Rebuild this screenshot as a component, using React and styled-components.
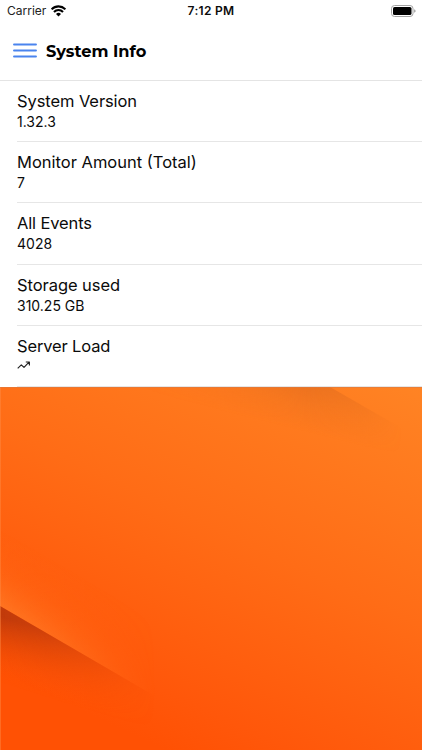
import React from "react";
import styled, { createGlobalStyle } from "styled-components";

const GlobalStyle = createGlobalStyle`
  * { box-sizing: border-box; }
  html, body { margin: 0; padding: 0; }
  body { overflow: hidden; font-family: Inter, "Liberation Sans", sans-serif; color: #0b0b0b; }
  svg { display: block; }
`;

const Screen = styled.main`
  width: 422px;
  height: 750px;
  display: flex;
  flex-direction: column;
  background: #fff;
  overflow: hidden;
`;

const StatusBar = styled.div`
  height: 22px;
  flex: none;
  display: grid;
  grid-template-columns: 1fr auto 1fr;
  align-items: center;
  padding: 0 6px 0 7px;
`;

const Carrier = styled.div`
  display: flex;
  align-items: center;
  gap: 5px;
  font-size: 12px;
  line-height: 22px;
  color: #222;
`;

const Clock = styled.time`
  font-size: 12px;
  line-height: 22px;
  font-weight: 600;
  letter-spacing: 0.3px;
  margin-right: 1px;
`;

const Battery = styled.div`
  justify-self: end;
`;

const Header = styled.header`
  height: 59px;
  flex: none;
  display: flex;
  align-items: center;
  gap: 9px;
  padding: 0 13px 1px;
  border-bottom: 1px solid #e4e4e4;
`;

const MenuButton = styled.button`
  width: 24px;
  height: 15px;
  padding: 0;
  border: 0;
  background: none;
`;

const Title = styled.h1`
  margin: 0;
  font-family: Montserrat, Inter, sans-serif;
  font-size: 16.2px;
  line-height: 22px;
  font-weight: 700;
  color: #000;
`;

const List = styled.ul`
  flex: none;
  margin: 0;
  padding: 0 0 0 17px;
  list-style: none;
  display: grid;
  grid-template-rows: 61px 61px 62px 61px 61px;
`;

const Row = styled.li`
  padding-top: 9px;
  border-bottom: 1px solid #e6e6e6;
`;

const Label = styled.div`
  font-size: 16.5px;
  line-height: 22px;
  letter-spacing: ${(p) => p.$tracking}px;
  white-space: nowrap;
`;

const Value = styled.div`
  font-size: 14px;
  line-height: 20px;
`;

const Wallpaper = styled.div`
  flex: 1;
  min-height: 0;
`;

const rows = [
  { label: "System Version", value: "1.32.3", tracking: -0.09 },
  { label: "Monitor Amount (Total)", value: "7", tracking: 0 },
  { label: "All Events", value: "4028", tracking: -0.13 },
  { label: "Storage used", value: "310.25 GB", tracking: -0.06 },
  { label: "Server Load", value: null, tracking: -0.15 },
];

const WifiIcon = () => (
  <svg width="15" height="12" viewBox="0 0 15 12" fill="none" stroke="#000" strokeWidth="2.1">
    <path d="M0.6 4.3A9.6 9.6 0 0 1 14.4 4.3" />
    <path d="M3 7A6.2 6.2 0 0 1 12 7" />
    <path d="M7.5 11.5 5 9A3.6 3.6 0 0 1 10 9Z" fill="#000" stroke="none" />
  </svg>
);

const BatteryIcon = () => (
  <svg width="25" height="12" viewBox="0 0 25 12">
    <rect x="0.5" y="0.5" width="21.5" height="11" rx="3" fill="#fff" stroke="#a3a3a3" />
    <rect x="2" y="2" width="18.5" height="8" rx="1.6" fill="#000" />
    <path d="M23.2 4.2Q24.6 4.8 24.6 6T23.2 7.8Z" fill="#999" />
  </svg>
);

const MenuIcon = () => (
  <svg width="24" height="15" viewBox="0 0 24 15" stroke="#4a84ee" strokeWidth="1.9" strokeLinecap="round">
    <path d="M1 1.5H23M1 7.5H23M1 13.5H23" />
  </svg>
);

const TrendIcon = () => (
  <svg width="14" height="20" viewBox="0 0 14 20" fill="none" stroke="#222" strokeWidth="1.15" strokeLinejoin="round">
    <path d="M0.7 11.4 4.3 7.8 7 10.4 12 5.2M8.8 5H12.4V8.4" />
  </svg>
);

const WallpaperArt = () => (
  <svg width="422" height="363" viewBox="0 0 422 363">
    <defs>
      <linearGradient id="base" gradientUnits="userSpaceOnUse" x1="372" y1="-30" x2="182" y2="371">
        <stop offset="0" stopColor="#ff8424" />
        <stop offset="0.5" stopColor="#ff6c16" />
        <stop offset="0.88" stopColor="#ff570a" />
        <stop offset="1" stopColor="#ff5104" />
      </linearGradient>
      <linearGradient id="topShade" gradientUnits="userSpaceOnUse" x1="330" y1="0" x2="318" y2="48">
        <stop offset="0" stopColor="#c45a1c" stopOpacity="0.36" />
        <stop offset="0.5" stopColor="#c45a1c" stopOpacity="0.15" />
        <stop offset="1" stopColor="#c45a1c" stopOpacity="0" />
      </linearGradient>
      <linearGradient id="topFade" gradientUnits="userSpaceOnUse" x1="130" y1="0" x2="402" y2="0">
        <stop offset="0" stopColor="#000" />
        <stop offset="0.65" stopColor="#fff" />
        <stop offset="0.85" stopColor="#999" />
        <stop offset="1" stopColor="#000" />
      </linearGradient>
      <mask id="topMask" maskUnits="userSpaceOnUse" x="0" y="0" width="422" height="363">
        <rect width="422" height="363" fill="url(#topFade)" />
      </mask>
      <linearGradient id="foldShade" gradientUnits="userSpaceOnUse" x1="40" y1="242" x2="21" y2="302">
        <stop offset="0" stopColor="#a92f0b" stopOpacity="0.72" />
        <stop offset="0.45" stopColor="#bd3504" stopOpacity="0.3" />
        <stop offset="1" stopColor="#ff5103" stopOpacity="0" />
      </linearGradient>
      <linearGradient id="foldGlow" gradientUnits="userSpaceOnUse" x1="40" y1="242" x2="73" y2="185">
        <stop offset="0" stopColor="#ff8730" stopOpacity="0.6" />
        <stop offset="0.5" stopColor="#ff7620" stopOpacity="0.22" />
        <stop offset="1" stopColor="#ff650e" stopOpacity="0" />
      </linearGradient>
      <linearGradient id="foldFade" gradientUnits="userSpaceOnUse" x1="0" y1="0" x2="155" y2="0">
        <stop offset="0" stopColor="#fff" />
        <stop offset="0.3" stopColor="#c4c4c4" />
        <stop offset="0.6" stopColor="#707070" />
        <stop offset="0.8" stopColor="#303030" />
        <stop offset="1" stopColor="#000" />
      </linearGradient>
      <mask id="foldMask" maskUnits="userSpaceOnUse" x="0" y="0" width="422" height="363">
        <rect width="422" height="363" fill="url(#foldFade)" />
      </mask>
    </defs>
    <rect width="422" height="363" fill="url(#base)" />
    <path d="M120 0H330L410 46V80H120Z" fill="url(#topShade)" mask="url(#topMask)" />
    <g mask="url(#foldMask)">
      <path d="M0 219 160 312V110H0Z" fill="url(#foldGlow)" />
      <path d="M0 219 160 312V363H0Z" fill="url(#foldShade)" />
    </g>
    <rect width="1" height="363" fill="#ff8b48" opacity="0.45" />
    <rect width="422" height="1" fill="#d67a48" opacity="0.5" />
  </svg>
);

export default function App() {
  return (
    <>
      <GlobalStyle />
      <Screen>
        <StatusBar>
          <Carrier>Carrier <WifiIcon /></Carrier>
          <Clock>7:12 PM</Clock>
          <Battery><BatteryIcon /></Battery>
        </StatusBar>
        <Header>
          <MenuButton aria-label="Menu"><MenuIcon /></MenuButton>
          <Title>System Info</Title>
        </Header>
        <List>
          {rows.map((r) => (
            <Row key={r.label}>
              <Label $tracking={r.tracking}>{r.label}</Label>
              <Value>{r.value ?? <TrendIcon />}</Value>
            </Row>
          ))}
        </List>
        <Wallpaper><WallpaperArt /></Wallpaper>
      </Screen>
    </>
  );
}
